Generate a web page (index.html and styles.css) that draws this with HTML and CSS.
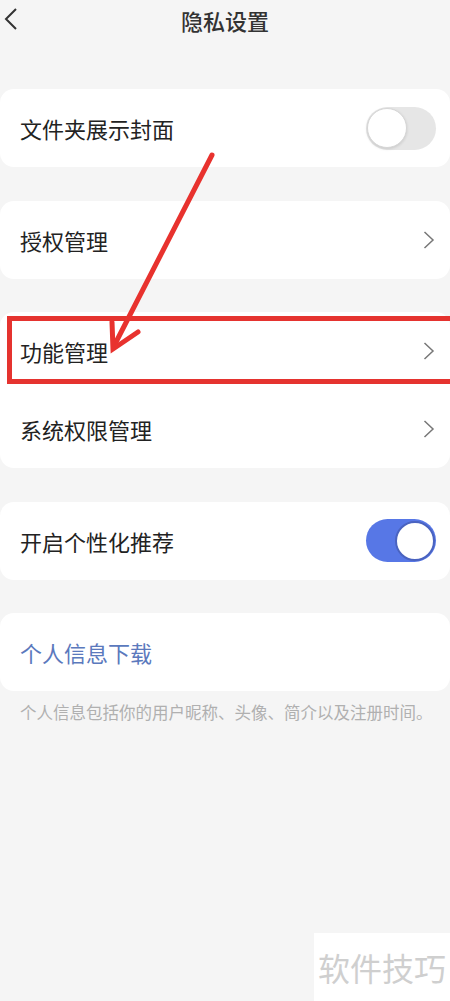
FILE: index.html
```html
<!DOCTYPE html>
<html lang="zh">
<head>
<meta charset="utf-8">
<link rel="stylesheet" href="styles.css">
</head>
<body>
<div class="page">
  <header class="topbar">
    <svg class="back" width="14" height="24" viewBox="0 0 14 24"><path d="M12 2 L2 12 L12 22" fill="none" stroke="#333" stroke-width="2"/></svg>
    <h1 class="title">隐私设置</h1>
  </header>
  <main class="list">
    <section class="card">
      <div class="row"><span class="label">文件夹展示封面</span><span class="switch off"><span class="knob"></span></span></div>
    </section>
    <section class="card">
      <div class="row"><span class="label">授权管理</span><svg class="chev" width="12" height="18" viewBox="0 0 12 18"><path d="M1.5 1 L10 9 L1.5 17" fill="none" stroke="#777" stroke-width="1.5"/></svg></div>
    </section>
    <section class="card">
      <div class="row"><span class="label">功能管理</span><svg class="chev" width="12" height="18" viewBox="0 0 12 18"><path d="M1.5 1 L10 9 L1.5 17" fill="none" stroke="#777" stroke-width="1.5"/></svg></div>
      <div class="row"><span class="label">系统权限管理</span><svg class="chev" width="12" height="18" viewBox="0 0 12 18"><path d="M1.5 1 L10 9 L1.5 17" fill="none" stroke="#777" stroke-width="1.5"/></svg></div>
    </section>
    <section class="card">
      <div class="row"><span class="label">开启个性化推荐</span><span class="switch on"><span class="knob"></span></span></div>
    </section>
    <section class="card">
      <div class="row"><span class="label link">个人信息下载</span></div>
    </section>
    <p class="note">个人信息包括你的用户昵称、头像、简介以及注册时间。</p>
  </main>
  <div class="highlight"></div>
  <svg class="arrow" width="450" height="1001" viewBox="0 0 450 1001">
    <path d="M212 155 L114 346" stroke="#e8322e" stroke-width="5" stroke-linecap="round" fill="none"/>
    <path d="M112 322 L113 349 L138 332" stroke="#e8322e" stroke-width="5" stroke-linejoin="miter" stroke-linecap="round" fill="none"/>
  </svg>
  <div class="watermark">软件技巧</div>
</div>
</body>
</html>
```
FILE: styles.css
```css
html, body {
  margin: 0;
  padding: 0;
}
body {
  background: #f5f5f5;
  font-family: "Noto Sans CJK SC", "Noto Sans", sans-serif;
  color: #222;
}
.page {
  position: relative;
  width: 450px;
  height: 1001px;
  overflow: hidden;
}
.topbar {
  height: 40px;
  display: flex;
  align-items: center;
  justify-content: center;
  position: relative;
}
.back {
  position: absolute;
  left: 4px;
  top: 7px;
}
.title {
  margin: 0;
  font-size: 22px;
  font-weight: 500;
  color: #333;
  line-height: 40px;
}
.list {
  padding-top: 49px;
  display: flex;
  flex-direction: column;
  gap: 33.5px;
}
.card {
  background: #fff;
  border-radius: 14px;
}
.row {
  height: 78px;
  display: flex;
  align-items: center;
  justify-content: space-between;
  padding: 0 14px 0 20px;
}
.label {
  font-size: 22px;
  color: #222;
}
.label.link {
  color: #5b79bd;
}
.chev {
  margin-right: 1px;
}
.switch {
  width: 70px;
  height: 43px;
  border-radius: 22px;
  display: flex;
  align-items: center;
  box-sizing: border-box;
  padding: 0 1px;
}
.switch .knob {
  width: 40px;
  height: 40px;
  border-radius: 50%;
  background: #fff;
  box-sizing: border-box;
}
.switch.off {
  background: #e6e6e6;
  justify-content: flex-start;
}
.switch.off .knob {
  border: 1.5px solid #d6d6d6;
  box-shadow: 0 1px 3px rgba(0,0,0,0.12);
}
.switch.on {
  background: #5777e6;
  justify-content: flex-end;
}
.switch.on .knob {
  border: 2px solid #4a63c0;
}
.note {
  margin: -25px 0 0 0;
  padding-left: 20px;
  font-size: 16.5px;
  color: #b0b0b0;
  line-height: 24px;
}
.highlight {
  position: absolute;
  left: 7px;
  top: 316px;
  width: 450px;
  height: 68px;
  border: 5px solid #e5332f;
  box-sizing: border-box;
}
.arrow {
  position: absolute;
  left: 0;
  top: 0;
}
.watermark {
  position: absolute;
  right: 0;
  bottom: 0;
  width: 136px;
  height: 68px;
  background: #fff;
  color: #cfcfcf;
  font-size: 32px;
  display: flex;
  align-items: center;
  justify-content: center;
}
```
